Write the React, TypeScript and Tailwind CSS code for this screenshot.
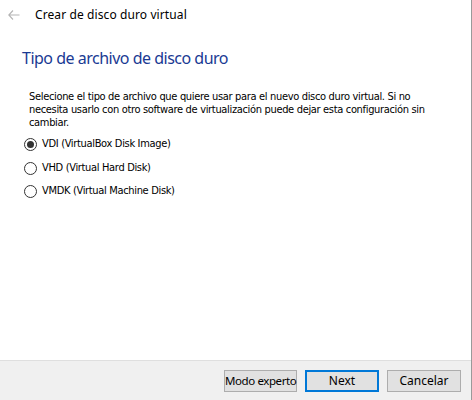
import { useState } from 'react';

const options = [
  { id: 'vdi', label: 'VDI (VirtualBox Disk Image)' },
  { id: 'vhd', label: 'VHD (Virtual Hard Disk)' },
  { id: 'vmdk', label: 'VMDK (Virtual Machine Disk)' },
];

export default function App() {
  const [selected, setSelected] = useState('vdi');

  return (
    <div className="w-[472px] h-[400px] flex bg-white font-['DejaVu_Sans',sans-serif] text-[11px] text-black">
      <div className="flex-1 flex flex-col">
        {/* header */}
        <div className="h-[30px] flex items-center pl-[8px]">
          <svg width="12" height="10" viewBox="0 0 12 10" className="text-[#b4b4b4]">
            <path d="M5 0.5 L0.8 5 L5 9.5 M0.8 5 H11.5" fill="none" stroke="currentColor" strokeWidth="1.1" />
          </svg>
          <span className="ml-[15px] font-['Noto_Sans',sans-serif] text-[12px] tracking-[0.1px]">Crear de disco duro virtual</span>
        </div>

        {/* content */}
        <div className="flex-1 flex flex-col pl-[22px] pr-[40px]">
          <h1 className="mt-[16px] font-['Noto_Sans',sans-serif] text-[16px] leading-[24px] text-[#1a3a93] tracking-[-0.5px]">
            Tipo de archivo de disco duro
          </h1>
          <p className="mt-[20px] pl-[7px] leading-[13px] tracking-[-0.33px] font-['DejaVu_Sans_Condensed','DejaVu_Sans',sans-serif]">
            Selecione el tipo de archivo que quiere usar para el nuevo disco duro virtual. Si no necesita usarlo con otro software de virtualización puede dejar esta configuración sin cambiar.
          </p>
          <div className="mt-[9px] flex flex-col gap-[10.5px] pl-[2px]">
            {options.map((o) => (
              <label key={o.id} className="flex items-center h-[13px] cursor-default" onClick={() => setSelected(o.id)}>
                <span className="w-[13px] h-[13px] rounded-full border border-[#333] flex items-center justify-center bg-white">
                  {selected === o.id && <span className="w-[7px] h-[7px] rounded-full bg-[#333]" />}
                </span>
                <span className="ml-[5px] tracking-[-0.33px] font-['DejaVu_Sans_Condensed','DejaVu_Sans',sans-serif]">{o.label}</span>
              </label>
            ))}
          </div>
        </div>

        {/* footer */}
        <div className="h-[40px] bg-[#f0f0f0] border-t border-[#dfdfdf] flex items-start justify-end pt-[9px] pr-[10px] gap-[8px] font-['Noto_Sans',sans-serif] text-[12px]">
          <button className="w-[73px] h-[22px] bg-[#e1e1e1] border border-[#adadad] text-[11.5px] tracking-[-0.4px] leading-none whitespace-nowrap">Modo experto</button>
          <button className="w-[74px] h-[22px] bg-[#e1e1e1] border-2 border-[#0078d7] leading-none">Next</button>
          <button className="w-[74px] h-[22px] bg-[#e1e1e1] border border-[#adadad] leading-none">Cancelar</button>
        </div>
      </div>
      <div className="w-[1px] bg-[#9a9a9a]" />
    </div>
  );
}
